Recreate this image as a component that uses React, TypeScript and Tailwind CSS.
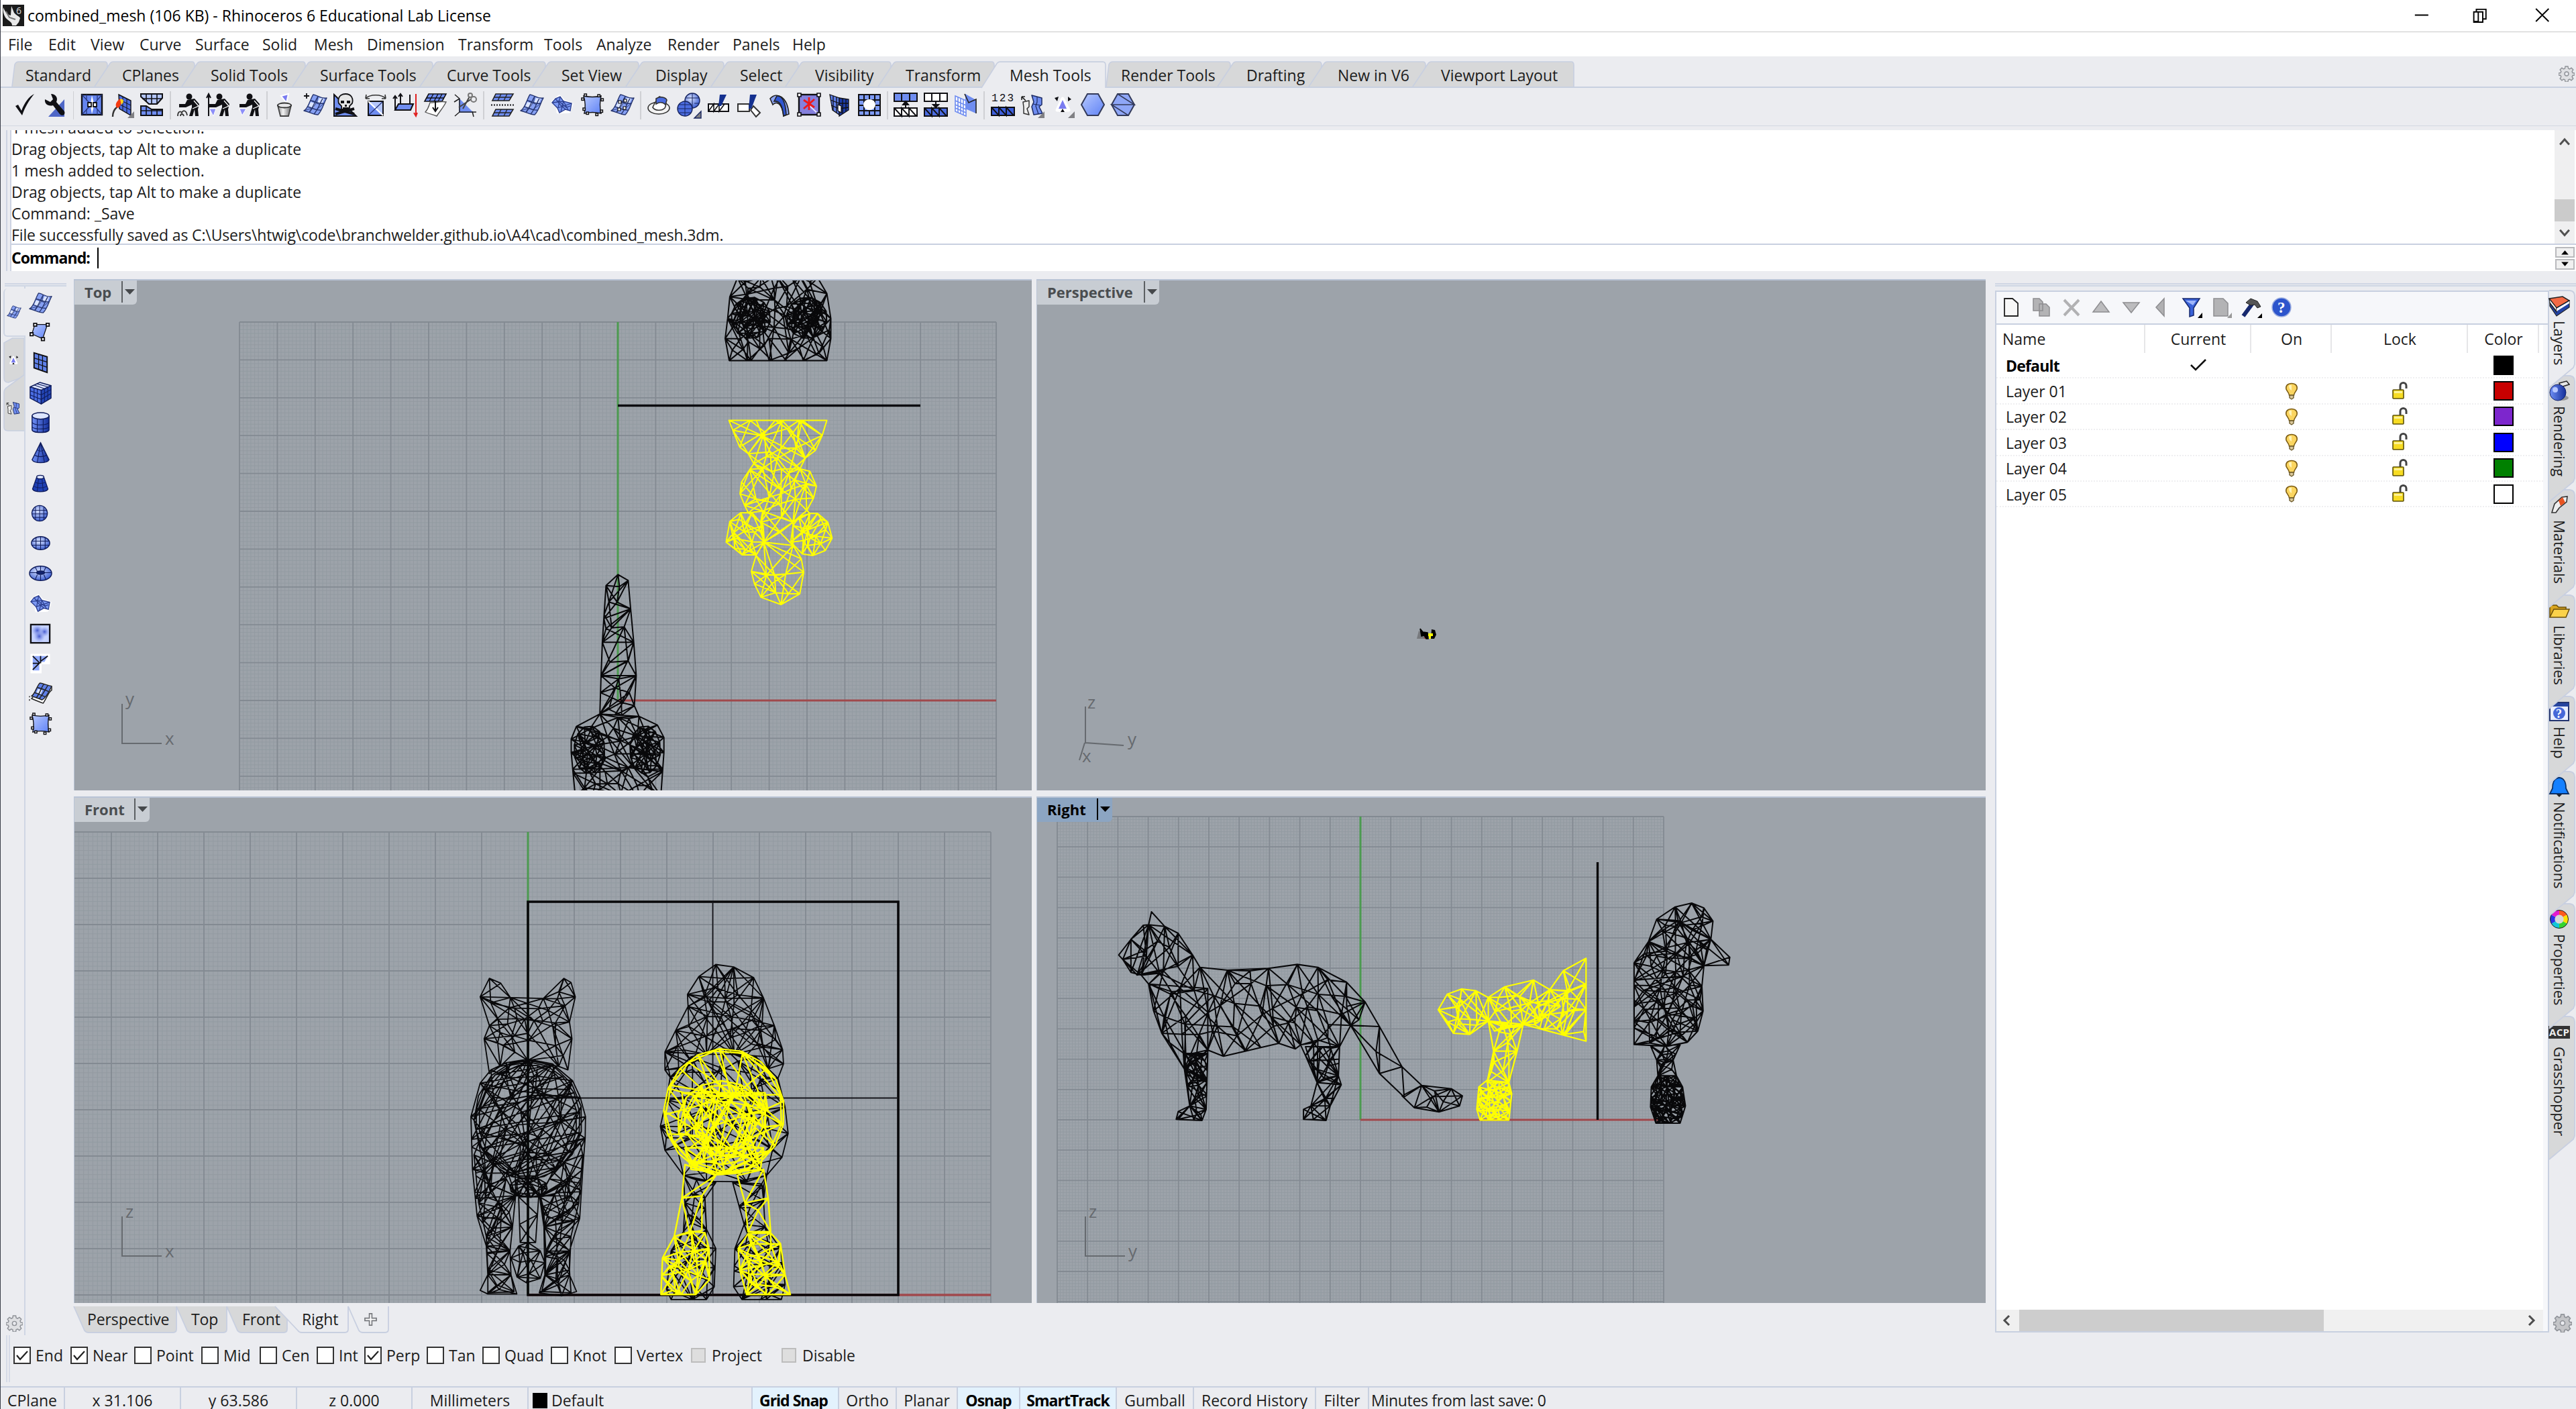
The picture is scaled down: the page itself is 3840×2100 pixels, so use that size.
import React from "react";

type Pt = [number, number];

/* ---------- wireframe generation ---------- */

function rng(seed: number) {
  let s = seed * 2654435761 + 12345;
  return () => {
    s = (s + 0x6d2b79f5) | 0;
    let t = Math.imul(s ^ (s >>> 15), 1 | s);
    t = (t + Math.imul(t ^ (t >>> 7), 61 | t)) ^ t;
    return ((t ^ (t >>> 14)) >>> 0) / 4294967296;
  };
}

function inside(p: Pt, poly: Pt[]) {
  let hit = false;
  for (let i = 0, j = poly.length - 1; i < poly.length; j = i++) {
    const [xi, yi] = poly[i];
    const [xj, yj] = poly[j];
    if (yi > p[1] !== yj > p[1] && p[0] < ((xj - xi) * (p[1] - yi)) / (yj - yi) + xi) hit = !hit;
  }
  return hit;
}

function triangulate(src: Pt[]) {
  const n = src.length;
  const p: Pt[] = [...src, [-40000, -40000], [40000, -40000], [0, 60000]];
  const make = (a: number, b: number, c: number) => {
    const [ax, ay] = p[a];
    const [bx, by] = p[b];
    const [cx, cy] = p[c];
    const d = 2 * (ax * (by - cy) + bx * (cy - ay) + cx * (ay - by)) || 1e-9;
    const a2 = ax * ax + ay * ay;
    const b2 = bx * bx + by * by;
    const c2 = cx * cx + cy * cy;
    const x = (a2 * (by - cy) + b2 * (cy - ay) + c2 * (ay - by)) / d;
    const y = (a2 * (cx - bx) + b2 * (ax - cx) + c2 * (bx - ax)) / d;
    return { v: [a, b, c], x, y, r: (ax - x) ** 2 + (ay - y) ** 2 };
  };
  let tris = [make(n, n + 1, n + 2)];
  for (let i = 0; i < n; i++) {
    const edges = new Map<string, [number, number] | null>();
    tris = tris.filter((t) => {
      if ((p[i][0] - t.x) ** 2 + (p[i][1] - t.y) ** 2 >= t.r) return true;
      for (let k = 0; k < 3; k++) {
        const a = t.v[k];
        const b = t.v[(k + 1) % 3];
        const key = a < b ? a + "_" + b : b + "_" + a;
        edges.set(key, edges.has(key) ? null : [a, b]);
      }
      return false;
    });
    edges.forEach((e) => e && tris.push(make(e[0], e[1], i)));
  }
  return tris.filter((t) => t.v.every((k) => k < n)).map((t) => t.v);
}

interface Frame {
  o: Pt;
  s: Pt;
}

function place(f: Frame, flat: number[]): Pt[] {
  const out: Pt[] = [];
  for (let i = 0; i < flat.length; i += 2) out.push([f.o[0] + flat[i] / f.s[0], f.o[1] + flat[i + 1] / f.s[1]]);
  return out;
}

function ellipse(cx: number, cy: number, rx: number, ry: number, n = 12): number[] {
  const out: number[] = [];
  for (let i = 0; i < n; i++) {
    const a = (i / n) * Math.PI * 2 + 0.2;
    out.push(cx + Math.cos(a) * rx, cy + Math.sin(a) * ry);
  }
  return out;
}

/* Each layer is triangulated in a skewed space so that its faces come out long and uneven. */
const SKEWS: [number, number, number][] = [
  [1.7, 1, 0.35],
  [1.45, 1, -0.6],
  [1, 1.35, 0.3],
];

function mesh(f: Frame, flat: number[], gap: number, layers: number, seed: number) {
  const poly = place(f, flat);
  const xs = poly.map((q) => q[0]);
  const ys = poly.map((q) => q[1]);
  const x0 = Math.min(...xs);
  const x1 = Math.max(...xs);
  const y0 = Math.min(...ys);
  const y1 = Math.max(...ys);
  let d = "M" + poly.map((q) => q[0].toFixed(1) + " " + q[1].toFixed(1)).join("L") + "Z";
  for (let l = 0; l < layers; l++) {
    const rand = rng(seed + l * 17);
    const pts: Pt[] = [];
    poly.forEach((a, i) => {
      const b = poly[(i + 1) % poly.length];
      const len = Math.hypot(b[0] - a[0], b[1] - a[1]);
      const steps = Math.max(1, Math.round(len / (gap * 1.25)));
      for (let k = 0; k < steps; k++) {
        const t = k === 0 ? 0 : (k + (rand() - 0.5) * 0.5) / steps;
        pts.push([a[0] + (b[0] - a[0]) * t + rand() * 0.02, a[1] + (b[1] - a[1]) * t + rand() * 0.02]);
      }
    });
    const tries = Math.min(3000, Math.round((((x1 - x0) * (y1 - y0)) / (gap * gap)) * 1.8));
    for (let k = 0; k < tries; k++) {
      const q: Pt = [x0 + rand() * (x1 - x0), y0 + rand() * (y1 - y0)];
      if (!inside(q, poly)) continue;
      if (pts.some((w) => Math.hypot(w[0] - q[0], w[1] - q[1]) < gap * 0.5)) continue;
      pts.push(q);
    }
    const [sx, sy, sk] = SKEWS[(l + seed) % 3];
    const seen = new Set<string>();
    triangulate(pts.map((q): Pt => [(q[0] - x0 + (q[1] - y0) * sk) * sx, (q[1] - y0) * sy])).forEach(([a, b, c]) => {
      const m: Pt = [(pts[a][0] + pts[b][0] + pts[c][0]) / 3, (pts[a][1] + pts[b][1] + pts[c][1]) / 3];
      if (!inside(m, poly)) return;
      [
        [a, b],
        [b, c],
        [c, a],
      ].forEach(([u, v]) => {
        const key = u < v ? u + "_" + v : v + "_" + u;
        if (seen.has(key)) return;
        seen.add(key);
        const q: Pt = [(pts[u][0] + pts[v][0]) / 2, (pts[u][1] + pts[v][1]) / 2];
        const near = [[1, 0], [-1, 0], [0, 1], [0, -1]].some(([dx, dy]) => inside([q[0] + dx, q[1] + dy], poly));
        if (!near) return;
        d += "M" + pts[u][0].toFixed(1) + " " + pts[u][1].toFixed(1) + "L" + pts[v][0].toFixed(1) + " " + pts[v][1].toFixed(1);
      });
    });
  }
  return d;
}

const TOP: Frame = { o: [840, 410], s: [2.178, 2.01] };
const FRONT: Frame = { o: [640, 1400], s: [2.178, 2.8] };
const RIGHT: Frame = { o: [1640, 1320], s: [1.6333, 3] };

const topBlack = [
  mesh(TOP, [565, 8, 825, 8, 855, 55, 868, 130, 868, 190, 855, 256, 538, 256, 525, 190, 533, 130, 540, 65], 25, 2, 3),
  mesh(TOP, ellipse(608, 128, 64, 62), 14, 2, 5),
  mesh(TOP, ellipse(790, 128, 66, 62), 14, 2, 8),
  mesh(TOP, ellipse(612, 122, 40, 40, 9), 14, 1, 6),
  mesh(TOP, ellipse(785, 122, 40, 40, 9), 14, 1, 9),
  mesh(TOP, [177, 897, 210, 915, 218, 1000, 228, 1100, 236, 1200, 230, 1290, 245, 1322, 118, 1315, 122, 1200, 126, 1100, 138, 930], 30, 2, 11),
  mesh(TOP, [118, 1315, 177, 1325, 245, 1322, 305, 1348, 326, 1385, 326, 1430, 316, 1560, 38, 1560, 25, 1430, 25, 1390, 42, 1352], 27, 2, 13),
  mesh(TOP, ellipse(84, 1422, 50, 72), 14, 2, 15),
  mesh(TOP, ellipse(265, 1422, 50, 72), 14, 2, 18),
];
const topYellow = [
  mesh(TOP, [537, 435, 855, 435, 840, 480, 818, 525, 785, 548, 768, 580, 800, 588, 821, 632, 812, 668, 790, 705, 800, 714, 745, 740, 745, 810, 772, 850, 780, 890, 767, 955, 706, 987, 641, 965, 620, 925, 610, 888, 625, 840, 650, 800, 640, 740, 600, 712, 588, 690, 573, 655, 578, 620, 605, 582, 618, 565, 600, 535, 572, 515, 550, 465], 30, 2, 21),
  mesh(TOP, [575, 712, 540, 738, 528, 800, 580, 838, 625, 838, 652, 800, 648, 750, 612, 712], 19, 2, 25),
  mesh(TOP, [800, 714, 825, 714, 858, 740, 872, 788, 850, 825, 810, 840, 775, 835, 738, 800, 745, 750, 765, 725], 19, 2, 29),
];
const frontCat = [
  mesh(FRONT, [195, 163, 232, 183, 263, 243, 370, 247, 437, 163, 460, 180, 474, 240, 455, 345, 463, 415, 450, 545, 420, 530, 320, 505, 230, 530, 195, 560, 178, 415, 195, 360, 165, 240], 31, 2, 31),
  mesh(FRONT, [320, 500, 400, 520, 465, 590, 490, 660, 507, 740, 506, 830, 498, 960, 488, 1165, 455, 1300, 455, 1400, 478, 1470, 430, 1488, 357, 1475, 375, 1400, 372, 1200, 358, 1075, 280, 1070, 270, 1200, 262, 1300, 265, 1400, 284, 1480, 190, 1480, 165, 1465, 190, 1400, 185, 1280, 155, 1155, 140, 960, 135, 740, 165, 600, 200, 545, 250, 515], 34, 2, 35),
  mesh(FRONT, [160, 850, 250, 1000, 280, 1070, 270, 1200, 262, 1300, 265, 1400, 275, 1470, 190, 1475, 190, 1380, 185, 1240, 160, 1100, 145, 900], 26, 2, 39),
  mesh(FRONT, [490, 850, 390, 1000, 360, 1070, 374, 1200, 378, 1300, 377, 1400, 365, 1470, 460, 1475, 455, 1380, 460, 1240, 485, 1100, 498, 900], 26, 2, 41),
  mesh(FRONT, ellipse(320, 757, 160, 235, 16), 64, 1, 43),
  mesh(FRONT, ellipse(320, 757, 170, 245, 18), 90, 1, 44),
  mesh(FRONT, ellipse(321, 752, 176, 250, 15), 110, 1, 45),
  mesh(FRONT, ellipse(322, 1035, 62, 42, 10), 14, 2, 46),
  mesh(FRONT, [320, 1265, 360, 1300, 375, 1350, 360, 1415, 315, 1433, 285, 1410, 265, 1330, 290, 1280], 22, 2, 47),
  mesh(FRONT, [290, 1075, 355, 1075, 345, 1265, 295, 1265], 32, 1, 49),
];
const frontPoodle = [
  mesh(FRONT, [930, 105, 988, 115, 1053, 160, 1085, 245, 1120, 360, 1147, 460, 1150, 520, 1132, 580, 1100, 540, 990, 480, 900, 480, 782, 575, 765, 545, 765, 470, 800, 380, 840, 280, 838, 230, 875, 155], 33, 3, 51),
  mesh(FRONT, [782, 575, 850, 490, 960, 455, 1060, 490, 1132, 580, 1155, 700, 1165, 810, 1145, 910, 1095, 985, 1030, 1012, 900, 1010, 825, 985, 765, 880, 750, 780, 770, 670], 34, 2, 55),
  mesh(FRONT, [825, 985, 930, 1015, 895, 1080, 900, 1210, 930, 1290, 925, 1450, 900, 1503, 785, 1503, 770, 1460, 785, 1300, 825, 1220, 830, 1100], 28, 2, 57),
  mesh(FRONT, [985, 1015, 1095, 985, 1085, 1090, 1090, 1200, 1140, 1290, 1155, 1440, 1143, 1503, 1015, 1503, 988, 1450, 992, 1290, 1022, 1190], 28, 2, 59),
];
const frontYellow = [
  mesh(FRONT, ellipse(957, 720, 196, 264, 17), 46, 1, 61),
  mesh(FRONT, ellipse(957, 720, 190, 258, 13), 110, 1, 62),
  mesh(FRONT, ellipse(950, 765, 145, 175, 14), 42, 1, 63),
  mesh(FRONT, ellipse(955, 755, 130, 150, 12), 60, 1, 64),
  mesh(FRONT, ellipse(960, 770, 100, 120, 12), 70, 1, 66),
  mesh(FRONT, [830, 870, 1085, 870, 1075, 960, 960, 975, 850, 960], 19, 1, 68),
  mesh(FRONT, [820, 640, 1090, 640, 1100, 720, 1040, 650, 870, 655, 830, 740], 24, 1, 69),
  mesh(FRONT, [830, 940, 930, 985, 885, 1070, 885, 1215, 845, 1225, 795, 1240, 820, 1080], 44, 1, 71),
  mesh(FRONT, [795, 1240, 850, 1218, 895, 1225, 908, 1290, 910, 1420, 865, 1482, 752, 1482, 757, 1330], 26, 2, 72),
  mesh(FRONT, [1000, 985, 1085, 960, 1100, 1080, 1108, 1220, 1035, 1220, 1025, 1100], 44, 1, 74),
  mesh(FRONT, [1108, 1225, 1140, 1270, 1155, 1400, 1172, 1482, 1030, 1482, 1008, 1380, 1003, 1290, 1035, 1228], 26, 2, 76),
];
const rightBlack = [
  mesh(RIGHT, [125, 117, 157, 182, 190, 213, 225, 310, 243, 365, 310, 378, 410, 370, 480, 352, 530, 365, 600, 432, 645, 520, 630, 600, 610, 625, 583, 720, 580, 850, 587, 890, 560, 985, 550, 1050, 495, 1045, 495, 1000, 513, 985, 528, 880, 500, 760, 488, 712, 475, 730, 435, 705, 300, 763, 262, 735, 260, 880, 258, 1000, 248, 1050, 185, 1045, 190, 1010, 218, 985, 205, 820, 150, 660, 130, 560, 118, 440, 100, 400, 75, 388, 55, 330, 45, 310, 75, 240, 105, 177, 118, 175], 36, 2, 81),
  mesh(RIGHT, [600, 432, 645, 520, 680, 630, 735, 810, 783, 893, 740, 945, 680, 840, 610, 625, 600, 540], 60, 2, 83),
  mesh(RIGHT, [783, 893, 855, 908, 882, 940, 875, 985, 825, 1012, 765, 993, 735, 940], 28, 2, 85),
  mesh(RIGHT, [120, 440, 262, 460, 262, 735, 260, 880, 258, 1000, 248, 1050, 185, 1045, 190, 1010, 218, 985, 205, 820, 150, 660], 52, 1, 87),
  mesh(RIGHT, [205, 750, 262, 750, 258, 1000, 248, 1050, 190, 1045, 218, 985], 19, 2, 88),
  mesh(RIGHT, [500, 720, 583, 720, 580, 850, 587, 890, 560, 985, 550, 1050, 495, 1045, 513, 985, 528, 880], 22, 2, 89),
  mesh(RIGHT, [125, 117, 157, 182, 190, 213, 225, 310, 190, 360, 90, 400, 55, 330, 45, 310, 75, 240, 118, 175], 34, 1, 90),
  mesh(RIGHT, [1440, 78, 1470, 100, 1492, 158, 1487, 240, 1470, 358, 1465, 450, 1468, 560, 1455, 650, 1430, 700, 1380, 718, 1300, 710, 1300, 345, 1335, 250, 1355, 150, 1400, 95], 27, 3, 91),
  mesh(RIGHT, [1487, 240, 1533, 320, 1530, 355, 1470, 358, 1460, 250], 60, 2, 93),
  mesh(RIGHT, [1340, 716, 1412, 712, 1395, 780, 1403, 850, 1358, 850, 1355, 780], 17, 2, 95),
  mesh(RIGHT, [1358, 850, 1403, 850, 1418, 900, 1425, 985, 1412, 1062, 1353, 1062, 1340, 990, 1342, 900], 12, 3, 97),
];
const rightYellow = [
  mesh(RIGHT, [1183, 325, 1183, 695, 1030, 620, 1095, 465, 1128, 380], 29, 2, 101),
  mesh(RIGHT, [1095, 465, 1120, 540, 1070, 600, 1030, 620, 960, 650, 945, 605, 945, 500, 985, 452, 1055, 422], 29, 2, 103),
  mesh(RIGHT, [945, 500, 945, 605, 900, 665, 860, 660, 823, 555, 845, 485, 880, 462, 915, 470], 24, 2, 105),
  mesh(RIGHT, [945, 605, 1030, 620, 1015, 740, 995, 880, 942, 880, 958, 740], 26, 2, 107),
  mesh(RIGHT, [942, 870, 995, 880, 1002, 930, 995, 1048, 925, 1048, 917, 1000, 922, 900], 12, 2, 109),
];

function Wire({ paths, color, width = 2 }: { paths: string[]; color: string; width?: number }) {
  return <path d={paths.join("")} fill="none" stroke={color} strokeWidth={width} strokeLinejoin="round" />;
}

function Grid({ ox, oy, pitch, y1 }: { ox: number; oy: number; pitch: number; y1: number }) {
  let minor = "";
  let major = "";
  const x0 = ox - pitch * 10;
  const x1 = ox + pitch * 10;
  const y0 = oy - pitch * 10;
  const bottom = Math.min(y1, oy + pitch * 10);
  for (let i = 0; i <= 200; i++) {
    const x = x0 + (i * pitch) / 10;
    const y = y0 + (i * pitch) / 10;
    const line = `M${x.toFixed(1)} ${y0}V${bottom}` + (y <= bottom ? `M${x0} ${y.toFixed(1)}H${x1}` : "");
    if (i % 10 === 0) major += line;
    else minor += line;
  }
  return (
    <g fill="none">
      <path d={minor} stroke="#939ba2" strokeWidth={1} />
      <path d={major} stroke="#838a92" strokeWidth={1.8} />
    </g>
  );
}

function Axes({ x, y, up, across }: { x: number; y: number; up: string; across: string }) {
  return (
    <g>
      <path d={`M${x} ${y - 59}V${y}H${x + 59}`} fill="none" stroke="#666a6f" strokeWidth={2} />
      <g fill="#666a6f" fontFamily="Open Sans, sans-serif" fontSize={26}>
        <text x={x + 5} y={y - 57}>{up}</text>
        <text x={x + 64} y={y + 2}>{across}</text>
      </g>
    </g>
  );
}

function Viewport({ name, labelW, active, box, children }: { name: string; labelW: string; active?: boolean; box: string; children: React.ReactNode }) {
  return (
    <div className="relative overflow-hidden bg-[#9da3aa] border-t-2 border-l border-[#b9c4d6]">
      <svg viewBox={box} preserveAspectRatio="none" className="absolute inset-0 h-full w-full">
        {children}
      </svg>
      <div className={`absolute left-0 top-0 flex h-[36px] items-center rounded-br-md pb-[2px] pl-[15px] text-[22px] font-bold ${labelW} ${active ? "bg-[#8ca5c2] text-black" : "bg-[#c8cdd3] text-[#4a4d50]"}`}>
        <span className="flex-1">{name}</span>
        <span className={`h-[32px] w-[2px] ${active ? "bg-black" : "bg-[#5c6063]"}`} />
        <svg viewBox="0 0 21 12" className="h-[12px] w-[21px]">
          <path d="M3 2H18L10.5 10Z" fill={active ? "#000" : "#45484b"} />
        </svg>
      </div>
    </div>
  );
}

/* ---------- icons ---------- */

const B = "#6f8df0";
const D = "#2846bd";
const L = "#b4c6fb";
const K = "#101014";

const sheet = (
  <g stroke="#26356f" strokeWidth={1.4} strokeLinejoin="round">
    <path d="M1 27C8 24 11 8 15 3C22 4 27 10 35 8C31 14 29 26 22 33C15 33 10 29 1 27Z" fill="#86a0f3" />
    <path d="M11 14L18 16L15 24L8 21ZM24 8L31 9L28 17L21 15Z" fill="#dbe5ff" stroke="none" />
    <path d="M6 21C13 22 18 27 26 26M11 12C18 12 22 18 31 16M9 29C15 22 18 12 22 6M16 32C23 24 25 15 29 9" fill="none" />
    <path d="M1 27L14 23M10 29L19 16M11 12L25 18M22 6L20 16M31 16L19 26" fill="none" strokeWidth={0.9} />
  </g>
);
const patch = (
  <g>
    <path d="M4 14L14 6L20 13L32 17L28 28L12 29L12 22Z" fill="#fff" stroke="#fff" strokeWidth={5} strokeLinejoin="round" />
    <path d="M3 15L8 9L15 6L20 13L32 16L30 27L23 25L14 30L11 23Z" fill="#7b98f2" stroke="#2c3f8f" strokeWidth={1.4} />
    <path d="M8 9L15 18L23 25M15 6L12 23M3 15L20 13L16 29M20 13L27 26M11 23L32 16M12 12L24 22L30 20" stroke="#2c3f8f" strokeWidth={1.3} fill="none" />
  </g>
);
const cage = (
  <g>
    <path d="M5 5Q18 8 31 5Q28 18 31 31Q18 28 6 31Q9 18 5 5Z" fill="url(#sky)" stroke={K} strokeWidth={1.4} />
    <g fill="#fff" stroke={K} strokeWidth={1.5}>
      {[[6, 2], [26, 3], [2, 8], [31, 9], [4, 23], [30, 26], [9, 29], [23, 31]].map(([x, y]) => (
        <rect key={x + "-" + y} x={x} y={y} width={3.4} height={3.4} />
      ))}
    </g>
  </g>
);
const reduceTri = (
  <g>
    <path d="M18 9L27 26H10Z" fill="#fff" stroke="#fff" strokeWidth={5} strokeLinejoin="round" />
    <path d="M18 11L24 24H12Z" fill="#7a7cf0" />
    <path d="M6 8L12 6L10 13ZM26 6L31 10L26 13ZM15 29L18 24L21 29Z" fill={K} />
  </g>
);
const splitMesh = (
  <g strokeLinejoin="round">
    <path d="M17 4L32 8V18L28 21L33 31L20 33L17 21L20 14Z" fill={B} stroke="#1d2b63" strokeWidth={1.5} />
    <path d="M25 6V14L23 20L27 32M19 17L30 19" stroke="#1d2b63" strokeWidth={1.2} fill="none" />
    <path d="M4 14L13 12V21L10 24L13 33L5 31V22Z" fill="#eee" stroke="#333" strokeWidth={1.5} />
    <path d="M2 6L8 12M2 6H7M2 6V11" stroke="#222" strokeWidth={1.6} fill="none" />
  </g>
);
const person = (
  <g fill={K}>
    <circle cx="19" cy="6" r="4.5" />
    <path d="M16 11L27 9L34 17L32 25L33 35H28L27 25L24 35H19L23 22V18L14 22H4V17H13Z" />
    <path d="M26 12L33 20L24 24" fill="none" stroke="#fff" strokeWidth={1.3} />
  </g>
);
const strip = (y: number, fill: string, diag: boolean) => (
  <g>
    <rect x={1} y={y} width={34} height={12} fill={fill} stroke={K} strokeWidth={2} />
    <path d={diag ? `M1 ${y}L12 ${y + 12}V${y}L23 ${y + 12}V${y}L34 ${y + 12}` : `M12 ${y}V${y + 12}M24 ${y}V${y + 12}`} stroke={K} strokeWidth={2} fill="none" />
  </g>
);
const fly = <path d="M36 28V38H26Z" fill="#808084" />;

const ICONS: Record<string, React.ReactNode> = {
  check: <path d="M4 20L8 18L13 27C18 14 24 6 32 2C24 12 18 22 14 34Z" fill={K} />,
  wrench: (
    <g>
      <path d="M32 10V36H8Z" fill={D} opacity={0.8} />
      <path d="M12 2C19 2 23 8 20 14L32 28C34 33 29 36 25 32L15 19C8 21 2 17 3 10L11 14L15 10Z" fill={K} />
    </g>
  ),
  unify: (
    <g>
      <rect x={3} y={3} width={30} height={30} fill="#6585ee" stroke={K} strokeWidth={2.4} />
      <path d="M18 4L16 16V20L18 32L21 20V16Z" fill="#fff" />
      <path d="M3 3L15 16M33 3L22 16M3 33L15 20M33 33L22 20M10 3V12M26 3V12M10 33V24M26 33V24" stroke="#26357a" strokeWidth={1.2} />
      <path d="M12 15h5v6h-5zM20 15h5v6h-5z" fill="#fff" stroke={K} strokeWidth={1.8} />
    </g>
  ),
  weld: (
    <g>
      <path d="M13 3L31 12V34L14 24Z" fill="#4b6ce0" stroke={K} strokeWidth={1.4} />
      <path d="M19 6V27M25 9V31M13 10L31 19M13 17L31 26" stroke={K} strokeWidth={1} />
      <path d="M15 9C19 15 15 23 10 23C7 18 9 14 15 9Z" fill="#f33a10" />
      <path d="M15 10C20 8 22 14 17 18Z" fill="#ffd21d" />
      <path d="M10 22C5 26 4 30 4 36" stroke="#333" strokeWidth={2.4} fill="none" />
      {fly}
    </g>
  ),
  match: (
    <g stroke={K} strokeWidth={2}>
      <path d="M2 2H34V8L26 17H14L2 6Z" fill={L} />
      <path d="M2 34H34V25H18L10 20H2Z" fill={B} />
      <path d="M10 2V14M18 2V17M26 2V17M4 9H33M2 27H34M10 20V34M18 25V34M26 25V34" strokeWidth={1.6} fill="none" />
    </g>
  ),
  shrub: (
    <g>
      {person}
      <path d="M2 35C2 28 6 27 8 30C10 25 15 27 16 34M6 35C6 31 10 31 11 35" stroke="#333" strokeWidth={1.8} fill="none" />
    </g>
  ),
  raise: (
    <g>
      {person}
      <path d="M3 35V4M0 8L3 2L6 8" stroke={K} strokeWidth={2} fill="none" />
      <path d="M4 24H14L10 35Z" fill="#8d8ff8" stroke="#fff" />
    </g>
  ),
  lower: (
    <g>
      {person}
      <path d="M4 24H14L8 34Z" fill="#8d8ff8" stroke="#fff" />
    </g>
  ),
  bin: (
    <g>
      <path d="M12 5L23 2L20 15Z" fill="#7a7cf0" stroke="#fff" strokeWidth={2} />
      <path d="M7 19L11 35H23L27 19Z" fill="url(#metal)" stroke="#444" strokeWidth={1.8} />
      <ellipse cx="17" cy="19" rx="10" ry="3.5" fill="#e8e8ea" stroke="#333" strokeWidth={1.8} />
    </g>
  ),
  addSheet: (
    <g>
      {sheet}
      <path d="M1 5H9M5 1V9" stroke={K} strokeWidth={1.8} />
    </g>
  ),
  skull: (
    <g>
      <path d="M1 3L34 35H1Z" fill={B} stroke={K} strokeWidth={2} />
      <path d="M3 24L31 32M31 24L3 32" stroke={K} strokeWidth={4} />
      <path d="M18 2C27 2 30 9 28 16L24 20V25H12V20L8 16C6 9 9 2 18 2Z" fill="#e6e6e6" stroke={K} strokeWidth={1.8} />
      <path d="M11 12h5v4h-5zM20 12h5v4h-5zM17 18h3v3h-3zM14 22h9v3h-9z" fill={K} />
    </g>
  ),
  flip: (
    <g>
      <path d="M3 9C9 2 27 2 33 9M3 9L4 3M3 9L9 9M33 9L32 3M33 9H27" fill="none" stroke="#333" strokeWidth={1.6} />
      <rect x={7} y={13} width={22} height={21} fill={B} stroke={K} strokeWidth={2} />
      <path d="M9 14H28V32Z" fill={L} />
      <path d="M7 13L29 34" stroke="#fff" strokeWidth={2.4} />
      <path d="M28 14L8 33" stroke="#26357a" strokeWidth={1.3} />
    </g>
  ),
  arrows: (
    <g strokeWidth={2} fill="none">
      <path d="M8 17H30L26 26H3Z" fill={B} stroke={K} />
      <path d="M3 26V6M11 17V3M25 17V3M0 9L3 5L6 9M8 6L11 2L14 6" stroke={K} />
      <path d="M34 2V35M31 30L34 35L36 30" stroke="#e02020" />
    </g>
  ),
  project: (
    <g>
      <path d="M8 2H34L28 13H2Z" fill={B} stroke={K} strokeWidth={1.6} />
      <path d="M5 8H31M15 2L9 13M22 2L16 13M28 2L22 13" stroke={K} strokeWidth={1.4} />
      <path d="M10 15C18 16 24 12 34 14C30 22 26 26 20 35C14 32 8 32 3 29C8 24 8 20 10 15Z" fill="#fff" stroke="#555" strokeWidth={1.4} />
      <path d="M18 12V27M14 22L18 28L22 22" stroke={K} strokeWidth={2} fill="none" />
    </g>
  ),
  scissors: (
    <g>
      <path d="M8 8V30H30Z" fill={B} />
      <path d="M2 3L9 9V29L2 35M9 29H34M9 9L1 14M28 28L30 36" stroke="#222" strokeWidth={1.5} fill="none" />
      <path d="M8 22L26 10M14 24L24 6" stroke="#444" strokeWidth={2} />
      <circle cx="30" cy="10" r="4" fill="none" stroke="#777" strokeWidth={2} />
      <circle cx="25" cy="4" r="3" fill="none" stroke="#777" strokeWidth={2} />
    </g>
  ),
  offset: (
    <g>
      <path d="M8 2H34L28 12H3ZM8 25H34L28 35H3Z" fill={B} stroke="#222" strokeWidth={1.6} />
      <path d="M5 7H31M16 2L11 12M25 2L20 12M5 30H31M16 25L11 35M25 25L20 35" stroke="#222" strokeWidth={1.3} />
      <path d="M1 18.500H35" stroke={K} strokeWidth={2} strokeDasharray="2 2" />
    </g>
  ),
  sheet,
  patch,
  cage,
  nurbs: (
    <g>
      {sheet}
      <path d="M12 12h4v4h-4zM20 10h4v4h-4zM11 23h4v4h-4zM19 21h4v4h-4z" fill="#fff" stroke={K} strokeWidth={1.2} />
    </g>
  ),
  hat: (
    <g stroke="#333" strokeWidth={1.6}>
      <ellipse cx="18" cy="23" rx="16" ry="9" fill="#f2f2f2" />
      <path d="M9 22C12 14 16 10 19 6L28 9C28 14 30 18 27 23C22 28 12 27 9 22Z" fill="#fff" />
      <path d="M14 9C20 5 28 7 30 11L28 18C24 14 19 14 14 17Z" fill="#4b6ce0" />
    </g>
  ),
  booleans: (
    <g stroke="#17245e" strokeWidth={1.4}>
      <circle cx="23" cy="12" r="11" fill="url(#ball)" />
      <circle cx="12" cy="24" r="11" fill="#4b6ce0" />
      <path d="M12 13V35M1 24H23M4 18H21M4 30H21M23 1V22M14 8H33M26 16H33" strokeWidth={1} />
      {fly}
    </g>
  ),
  trim: (
    <g>
      <rect x={2} y={17} width={30} height={11} fill="#fff" stroke={K} strokeWidth={2} />
      <path d="M2 28L10 17V28L18 17V28L26 17" stroke={K} strokeWidth={1.6} fill="none" />
      <path d="M19 3H29L21 20H17Z" fill="#14308f" />
    </g>
  ),
  split: (
    <g>
      <path d="M1 17H18V28H1ZM24 20L34 30L28 36L20 26Z" fill="#fff" stroke="#333" strokeWidth={2} />
      <path d="M19 3H29L21 24H17Z" fill="#14308f" />
    </g>
  ),
  pipe: (
    <g stroke="#222" strokeWidth={1.6}>
      <path d="M4 9C14 -2 30 6 32 32L24 35C22 16 14 12 8 18Z" fill="#8da4f2" />
      <path d="M14 5C22 4 27 14 28 33L24 35C22 18 18 12 10 13Z" fill="#2f55d0" />
    </g>
  ),
  star: (
    <g>
      <rect x={3} y={3} width={30} height={30} fill="#8580dd" stroke={K} strokeWidth={2.4} />
      <path d="M18 19L33 33" stroke="#e6e2ff" strokeWidth={1.8} />
      <path d="M18 7V26M10 11L26 22M26 10L10 24" stroke="#f01818" strokeWidth={2.8} />
      <path d="M1 1h5v5h-5zM30 1h5v5h-5zM1 30h5v5h-5zM30 30h5v5h-5z" fill="#fff" stroke={K} strokeWidth={1.6} />
    </g>
  ),
  folded: (
    <g stroke={K} strokeWidth={1.3}>
      <path d="M4 3L18 8V33L8 26Z" fill="#5e7ee8" />
      <path d="M18 8L32 10V26L18 35Z" fill="#1c3ba6" />
      <path d="M9 5V27M14 7V30M5 11L18 16L32 16M6 19L18 24L32 22M23 9V31M28 9V28" fill="none" />
      <path d="M16 18L21 20V30L16 27Z" fill="#fff" />
    </g>
  ),
  hole: (
    <g>
      <rect x={2} y={3} width={32} height={31} fill="#7d9af5" stroke={K} strokeWidth={2} />
      <path d="M10 3V34M18 3V34M26 3V34M2 11H34M2 19H34M2 27H34" stroke={K} strokeWidth={2} />
      <ellipse cx="18" cy="18" rx="9" ry="8" fill="#fff" />
    </g>
  ),
  up: (
    <g>
      {strip(1, B, false)}
      {strip(23, "#fff", true)}
      <path d="M18 23V14M14 18L18 13L22 18Z" stroke={K} strokeWidth={2} fill={K} />
    </g>
  ),
  down: (
    <g>
      {strip(1, "#fff", false)}
      {strip(23, "#4b6ce0", true)}
      <path d="M18 13V21M14 18L18 22L22 18Z" stroke={K} strokeWidth={2} fill={K} />
    </g>
  ),
  mirror: (
    <g>
      <path d="M2 5L18 12V35L2 28Z" fill="#fff" stroke={B} strokeWidth={1.6} />
      <path d="M6 7V30M10 9V32M14 10V34M2 12L18 19M2 18L18 25M2 23L18 30" stroke={B} strokeWidth={1.6} />
      <path d="M17 2L33 11V31L17 24Z" fill={B} />
      <path d="M16 2L22 15L33 10V31" fill="none" stroke="#222" strokeWidth={1.6} />
    </g>
  ),
  count: (
    <g>
      <text x="1" y="13" fontSize="16" fontFamily="Liberation Mono, monospace" textLength="33" fill={K}>123</text>
      {strip(22, "#3d5fdc", true)}
    </g>
  ),
  splitMesh: (
    <g>
      {splitMesh}
      {fly}
    </g>
  ),
  reduce: (
    <g>
      {reduceTri}
      {fly}
    </g>
  ),
  reduceTri,
  splitPlain: splitMesh,
  hex: <path d="M10 2H26L35 18L26 34H10L1 18Z" fill="url(#sky)" stroke="#333a5a" strokeWidth={2} />,
  hexTri: (
    <g stroke="#333a5a" strokeWidth={2}>
      <path d="M10 2H26L35 18L26 34H10L1 18Z" fill="#8ea6f7" />
      <path d="M10 2L35 18H1L26 34" fill="none" strokeWidth={1.5} />
    </g>
  ),
  quad: (
    <g>
      <path d="M9 4L30 4L22 28L4 20Z" fill="url(#sky)" stroke={K} strokeWidth={1.4} />
      <path d="M7 2h5v5h-5zM28 2h5v5h-5zM1 18h5v5h-5zM20 26h5v5h-5z" fill="#fff" stroke={K} strokeWidth={2} />
    </g>
  ),
  plane: (
    <g stroke={K} strokeWidth={1.3}>
      <path d="M8 3L28 9V33L8 26Z" fill="#5f80e8" strokeWidth={2} />
      <path d="M15 5V28M21 7V31M8 11L28 17M8 18L28 25" />
    </g>
  ),
  box: (
    <g stroke="#0f1c5c" strokeWidth={1.5} strokeLinejoin="round">
      <path d="M2 9L17 2L34 7L19 14Z" fill="#dce5ff" />
      <path d="M2 9L19 14V35L2 26Z" fill="#4a6de2" />
      <path d="M19 14L34 7V26L19 35Z" fill="#2345b5" />
      <path d="M8 11V29M13 12V32M24 12V32M29 10V29M2 15L19 21L34 13M2 21L19 28L34 19M8 6L25 12M12 4L30 9" fill="none" strokeWidth={1.1} />
    </g>
  ),
  cylinder: (
    <g stroke="#0f1c5c" strokeWidth={1.5}>
      <path d="M5 7V28C5 34 31 34 31 28V7Z" fill="url(#deep)" />
      <ellipse cx="18" cy="7" rx="13" ry="5" fill="#dce5ff" />
      <path d="M13 12V32M22 12V32M5 17C8 22 28 22 31 17M5 24C8 28 28 28 31 24" fill="none" strokeWidth={1.1} />
    </g>
  ),
  cone: (
    <g stroke="#0f1c5c" strokeWidth={1.5}>
      <path d="M18 2L31 28C28 34 8 34 5 28Z" fill="url(#deep)" />
      <path d="M18 2L13 32M18 2L24 32M13 13C16 15 20 15 23 13M9 21C14 24 22 24 27 21" fill="none" strokeWidth={1.1} />
    </g>
  ),
  tcone: (
    <g stroke="#0f1c5c" strokeWidth={1.5}>
      <path d="M12 8L5 28C8 34 28 34 31 28L24 8Z" fill="#1f40b4" />
      <ellipse cx="18" cy="8" rx="6" ry="3" fill="#dce5ff" />
      <path d="M15 11L13 32M21 11L23 32M10 17C14 19 22 19 26 17M7 23C13 27 23 27 29 23" fill="none" strokeWidth={1.1} />
    </g>
  ),
  sphere: (
    <g stroke="#0f1c5c" strokeWidth={1.5}>
      <circle cx="17" cy="18" r="13" fill="url(#ball)" />
      <path d="M17 5V31M10 7V29M24 7V29M5 13H29M4 19H30M6 25H28" strokeWidth={1.1} />
    </g>
  ),
  ellipsoid: (
    <g stroke="#0f1c5c" strokeWidth={1.5}>
      <ellipse cx="18" cy="18" rx="14" ry="10" fill="url(#ball)" />
      <path d="M18 8V28M11 9V27M25 9V27M5 15H31M5 21H31" strokeWidth={1.1} />
    </g>
  ),
  torus: (
    <g stroke="#0f1c5c" strokeWidth={1.5}>
      <ellipse cx="18" cy="18" rx="17" ry="11" fill="url(#ball)" />
      <ellipse cx="18" cy="17" rx="6" ry="2.500" fill="#12236e" />
      <path d="M18 7V14M10 9L13 15M26 9L23 15M18 20V29M10 27L13 20M26 27L23 20M1 17H12M24 17H35" strokeWidth={1.1} />
    </g>
  ),
  height: (
    <g>
      <rect x={3} y={4} width={29} height={28} fill="#c5d2ff" stroke={K} strokeWidth={2.4} />
      <g fill="url(#spot)">
        <circle cx="13" cy="13" r="9" />
        <circle cx="24" cy="15" r="8" />
        <circle cx="16" cy="22" r="9" />
      </g>
    </g>
  ),
  corner: (
    <g>
      <path d="M5 6H30V17H17V31H5Z" fill="#fff" stroke="#fff" strokeWidth={5} />
      <path d="M6 7H29L24 16H16V29H6Z" fill="#8fa9ff" />
      <path d="M6 7L17 18M18 7V18M29 7L18 15M6 18H16L6 28" stroke={K} strokeWidth={1.8} fill="none" />
    </g>
  ),
  thick: (
    <g stroke="#222" strokeWidth={1.5} strokeLinejoin="round">
      <path d="M4 26C9 28 16 31 22 33C28 24 30 16 35 13V8L20 9Z" fill="#fff" />
      <path d="M4 22C10 19 12 6 17 2C23 3 29 6 35 7C31 14 28 24 20 28C14 25 9 24 4 22Z" fill="#5f80e8" />
      <path d="M14 11L21 13L18 20L11 18Z" fill="#dbe5ff" stroke="none" />
      <path d="M9 17C15 18 20 22 25 23M13 9C19 10 25 13 30 15M11 25C17 19 18 10 23 4M16 26C22 19 25 12 29 6" fill="none" />
      <path d="M1 22V24M1 27V29" />
    </g>
  ),
};

function Icon({ name, className }: { name: string; className: string }) {
  return (
    <svg viewBox="0 0 36 36" className={`shrink-0 overflow-visible ${className}`}>
      {ICONS[name]}
    </svg>
  );
}

function Gear({ className, fill }: { className: string; fill: string }) {
  return (
    <svg viewBox="0 0 24 24" className={className}>
      <path d="M10 1h4l.5 3 2 .9 2.600-1.700 2.700 2.700-1.700 2.600.9 2 3 .5v3l-3 .5-.9 2 1.700 2.600-2.700 2.700-2.600-1.700-2 .9-.5 3h-4l-.5-3-2-.9-2.600 1.700-2.700-2.700 1.700-2.600-.9-2-3-.5v-3l3-.5.9-2-1.700-2.600 2.700-2.700 2.600 1.700 2-.9z" fill={fill} stroke="#8f9298" strokeWidth={1.4} />
      <circle cx="12" cy="12" r="3" fill="#eaebef" stroke="#8f9298" strokeWidth={1.4} />
    </svg>
  );
}

/* ---------- window chrome ---------- */

const MENUS = [
  ["File", "w-[60px]"], ["Edit", "w-[63px]"], ["View", "w-[73px]"], ["Curve", "w-[83px]"], ["Surface", "w-[100px]"],
  ["Solid", "w-[77px]"], ["Mesh", "w-[79px]"], ["Dimension", "w-[136px]"], ["Transform", "w-[128px]"], ["Tools", "w-[78px]"],
  ["Analyze", "w-[106px]"], ["Render", "w-[97px]"], ["Panels", "w-[89px]"], ["Help", "w-[80px]"],
];

const TABS: [string, number, string][] = [
  ["Standard", 143, "pl-[20px]"], ["CPlanes", 130, "pl-[21px]"], ["Solid Tools", 165, "pl-[23px]"], ["Surface Tools", 190, "pl-[21px]"],
  ["Curve Tools", 168, "pl-[20px]"], ["Set View", 139, "pl-[23px]"], ["Display", 127, "pl-[24px]"], ["Select", 111, "pl-[23px]"],
  ["Visibility", 138, "pl-[24px]"], ["Transform", 154, "pl-[21px]"], ["Mesh Tools", 166, "pl-[22px]"], ["Render Tools", 186, "pl-[22px]"],
  ["Drafting", 136, "pl-[23px]"], ["New in V6", 155, "pl-[23px]"], ["Viewport Layout", 221, "pl-[22px]"],
];

const TOOLS = [
  ["check", "wrench"],
  ["unify", "weld", "match"],
  ["shrub", "raise", "lower"],
  ["bin", "addSheet", "skull", "flip", "arrows", "project", "scissors"],
  ["offset", "sheet", "patch", "cage", "nurbs"],
  ["hat", "booleans", "trim", "split", "pipe", "star", "folded", "hole"],
  ["up", "down", "mirror"],
  ["count", "splitMesh", "reduce", "hex", "hexTri"],
];

function TitleBar() {
  return (
    <div className="flex h-[48px] items-center border-b border-[#c9c9c9] bg-white pl-[3px]">
      <svg viewBox="0 0 32 32" className="mt-[-2px] h-[32px] w-[32px]">
        <rect width="32" height="32" fill="#1b1b1b" />
        <path d="M1 4C4 12 7 15 12 16L13 2L17 12C20 16 25 17 26 20L24 26L20 31H14C14 25 8 24 4 19C1 14 0 9 1 4Z" fill="#e9e9e9" />
        <path d="M5 10L10 19L19 22" stroke="#777" fill="none" strokeWidth={2} />
        <text x="20" y="14" fontSize="14" fill="#ddd" fontFamily="Open Sans, sans-serif">6</text>
      </svg>
      <span className="ml-[5px] flex-1 text-black">combined_mesh (106 KB) - Rhinoceros 6 Educational Lab License</span>
      <svg viewBox="0 0 220 26" className="mr-[34px] mt-[-3px] h-[25px] w-[210px]" fill="none" stroke="#000" strokeWidth={2}>
        <path d="M4 13H25M103 8V23H96M96 8H110V24H96ZM100 8V4H115V19H110M193 3L213 23M213 3L193 23" />
      </svg>
    </div>
  );
}

function MenuBar() {
  return (
    <div className="flex h-[36px] items-center bg-white pl-[11px]">
      {MENUS.map(([m, w]) => (
        <span key={m} className={`whitespace-nowrap ${w}`}>{m}</span>
      ))}
    </div>
  );
}

function TabBar() {
  return (
    <div className="flex h-[47px] items-end border-b-2 border-[#c8d0e0] pl-[17px]">
      {TABS.map(([t, w, pad], i) => {
        const on = t === "Mesh Tools";
        const l = t === "Render Tools" || i === 0 ? 20 : 0;
        return (
          <div key={t} className={`relative flex items-center ${pad} ${on ? "-mb-[2px] h-[40px] pt-[2px]" : "h-[38px] pt-[4px]"}`} style={{ width: w }}>
            <svg className="absolute -left-[20px] top-0 h-full overflow-visible" width={w + 20} viewBox={`0 0 ${w + 20} 38`} preserveAspectRatio="none">
              <path d={`M${l} 38L${l ? l + 4 : 22} 5Q${l ? l + 6 : 24} 1 ${l ? l + 10 : 28} 1H${w + 15}Q${w + 19} 1 ${w + 19} 6V38`} fill={on ? "#ebecf0" : "#d7d8d9"} stroke="#c8cfe0" strokeWidth={1.6} />
            </svg>
            <span className="relative whitespace-nowrap">{t}</span>
          </div>
        );
      })}
      <div className="flex h-full flex-1 items-center justify-end pr-[2px] pt-[6px]">
        <Gear className="h-[24px] w-[24px]" fill="#dfe0e3" />
      </div>
    </div>
  );
}

function Toolbar() {
  return (
    <div className="flex h-[57px] items-start border-b border-[#d3d8e2] pl-[8px] pt-[3px]">
      <div className="w-[6px]" />
      {TOOLS.map((group, g) => (
        <React.Fragment key={g}>
          {g > 0 && <div className="mx-[4px] mt-[2px] h-[42px] w-[1.800px] bg-[#cfd0d4]" />}
          {group.map((n) => (
            <div key={n} className="flex h-[44px] w-[44.800px] items-center justify-center">
              <Icon name={n} className="h-[36px] w-[36px]" />
            </div>
          ))}
        </React.Fragment>
      ))}
    </div>
  );
}

function CommandArea() {
  const lines = ["Drag objects, tap Alt to make a duplicate", "1 mesh added to selection.", "Drag objects, tap Alt to make a duplicate", "Command: _Save"];
  return (
    <div className="mt-[6px] flex h-[210px] pl-[8px]">
      <div className="w-[8px] border-x-2 border-[#cdd3e2]" />
      <div className="flex flex-1 flex-col bg-white">
        <div className="flex h-[171px] border-b-2 border-[#c8d0e0]">
          <div className="h-[169px] flex-1 whitespace-nowrap leading-[32px]">
            <div className="flex h-[12px] items-end overflow-hidden">1 mesh added to selection.</div>
            {lines.map((l, i) => (
              <div key={i}>{l}</div>
            ))}
            <div className="tracking-[-0.15px]">File successfully saved as C:\Users\htwig\code\branchwelder.github.io\A4\cad\combined_mesh.3dm.</div>
          </div>
          <div className="mr-[2px] flex w-[30px] flex-col items-center bg-[#efeff0]">
            <svg viewBox="0 0 30 34" className="h-[34px] w-[30px]" fill="none" stroke="#505050" strokeWidth={3}>
              <path d="M8 22L15 14L22 22" />
            </svg>
            <div className="mt-[70px] h-[33px] w-full bg-[#cbcbcb]" />
            <svg viewBox="0 0 30 34" className="h-[34px] w-[30px]" fill="none" stroke="#505050" strokeWidth={3}>
              <path d="M8 13L15 21L22 13" />
            </svg>
          </div>
        </div>
        <div className="flex flex-1 items-center">
          <span className="w-[128px] font-bold tracking-[-0.9px] text-black">Command:</span>
          <span className="h-[31px] w-[2px] bg-black" />
          <div className="mr-[2px] ml-auto flex flex-col gap-[2px]">
            {["M8 11L14 4L20 11Z", "M8 3H20L14 10Z"].map((d) => (
              <div key={d} className="flex h-[16px] w-[29px] items-center justify-center border-2 border-[#b9babd] bg-[#f0f0f0]">
                <svg viewBox="0 0 28 14" className="h-[14px] w-[28px]">
                  <path d={d} fill="#000" />
                </svg>
              </div>
            ))}
          </div>
        </div>
      </div>
    </div>
  );
}

/* ---------- left tool strip ---------- */

const SIDE_TOOLS = ["sheet", "quad", "plane", "box", "cylinder", "cone", "tcone", "sphere", "ellipsoid", "torus", "patch", "height", "corner", "thick", "cage"];

function LeftBar() {
  return (
    <div className="flex w-[110px] flex-col pt-[18px]">
      <div className="ml-[6px] h-[5px] w-[92px] border-y-2 border-[#cfd6e4]" />
      <div className="flex flex-1">
        <div className="flex w-[37px] flex-col border-r-2 border-[#cfd6e4] pl-[4px]">
          <div className="-mr-[2px] mt-[3px] flex h-[72px] items-center justify-center rounded-l-md border-b-2 border-l-2 border-[#cfd6e4] bg-[#ebecf0] pr-[4px]">
            <Icon name="sheet" className="h-[22px] w-[22px]" />
          </div>
          <div className="relative flex h-[70px] items-center justify-center pr-[2px]">
            <svg viewBox="0 0 32 70" className="absolute inset-0 h-full w-full">
              <path d="M32 1H14L1 8V62Q1 69 8 69L32 60Z" fill="#d7d8d9" stroke="#c8cfe0" strokeWidth={1.6} />
            </svg>
            <Icon name="reduceTri" className="relative h-[20px] w-[20px]" />
          </div>
          <div className="relative flex h-[72px] items-center justify-center pr-[2px]">
            <svg viewBox="0 0 32 72" className="absolute inset-0 h-full w-full overflow-visible">
              <path d="M32 -15L6 4Q1 7 1 12V66Q1 71 7 71H32" fill="#d7d8d9" stroke="#c8cfe0" strokeWidth={1.6} />
            </svg>
            <Icon name="splitPlain" className="relative h-[22px] w-[22px]" />
          </div>
          <Gear className="ml-[4px] mt-auto mb-[5px] h-[25px] w-[25px]" fill="#dfe0e3" />
        </div>
        <div className="flex flex-col pt-[2px]">
          {SIDE_TOOLS.map((n) => (
            <div key={n} className="flex h-[44.800px] w-[44px] items-center justify-center">
              <Icon name={n} className={n === "quad" || n === "tcone" || n === "sphere" ? "h-[32px] w-[32px]" : "h-[35px] w-[35px]"} />
            </div>
          ))}
        </div>
      </div>
    </div>
  );
}

/* ---------- viewports ---------- */

const VIEW_TABS: [string, number, string][] = [
  ["Perspective", 153, "pl-[20px]"],
  ["Top", 75, "pl-[22px]"],
  ["Front", 90, "pl-[23px]"],
  ["Right", 91, "pl-[22px]"],
  ["", 60, ""],
];

function Viewports() {
  return (
    <div className="flex w-[2850px] flex-col pt-[12px]">
      <div className="grid grid-cols-[1428px_1415px] grid-rows-[762px_755px] gap-x-[7px] gap-y-[9px]">
        <Viewport name="Top" labelW="w-[93px]" box="111 418 1427 760">
          <Grid ox={921} oy={1044} pitch={56.4} y1={1180} />
          <path d="M921 480V1044" stroke="#4c9a50" strokeWidth={3} />
          <path d="M921 1044H1485" stroke="#a0494c" strokeWidth={3} />
          <Wire paths={topBlack} color="#08080a" />
          <path d="M921 604.500H1372" stroke="#0c0c10" strokeWidth={3.600} />
          <Wire paths={topYellow} color="#ffff00" />
          <Axes x={182} y={1108} up="y" across="x" />
        </Viewport>
        <Viewport name="Perspective" labelW="w-[182px]" box="1546 418 1414 760">
          <path d="M1618 1053V1107L1675 1111M1617 1107L1609 1133" fill="none" stroke="#666a6f" strokeWidth={2} />
          <g fill="#666a6f" fontFamily="Open Sans, sans-serif" fontSize={26}>
            <text x={1621} y={1056}>z</text>
            <text x={1681} y={1111}>y</text>
            <text x={1613} y={1136}>x</text>
          </g>
          <path d="M2115 940L2112 952H2130Z" fill="#77797d" />
          <path d="M2126 944L2124 952" stroke="#a0494c" strokeWidth={3} />
          <path d="M2117 937L2121 942L2128 943L2129 952H2126L2123 947L2119 948Z" fill="#000" stroke="#000" strokeWidth={1.5} />
          <path d="M2134 938L2139 939L2141 946L2138 952H2133Z" fill="#000" />
          <path d="M2129 944H2136V948H2133V952H2130V948H2129Z" fill="#ff0" />
        </Viewport>
        <Viewport name="Front" labelW="w-[112px]" box="111 1189 1427 753">
          <Grid ox={787} oy={1930} pitch={69} y1={1942} />
          <path d="M787 1240V1930" stroke="#4c9a50" strokeWidth={3} />
          <path d="M787 1930H1477" stroke="#a0494c" strokeWidth={3.500} />
          <path d="M787 1344H1339V1930H787Z" fill="none" stroke="#08080a" strokeWidth={3.600} />
          <path d="M1062.500 1344V1930M787 1636.500H1339" stroke="#15151a" strokeWidth={1.800} />
          <Wire paths={frontCat} color="#08080a" width={1.800} />
          <Wire paths={frontPoodle} color="#08080a" width={1.800} />
          <Wire paths={frontYellow} color="#ffff00" width={2.400} />
          <Axes x={182} y={1872} up="z" across="x" />
        </Viewport>
        <Viewport name="Right" labelW="w-[112px]" active box="1546 1189 1414 753">
          <Grid ox={2028} oy={1669} pitch={45.2} y1={1942} />
          <path d="M2028 1217V1669" stroke="#4c9a50" strokeWidth={3} />
          <path d="M2028 1669H2480" stroke="#a0494c" strokeWidth={3} />
          <path d="M2381.500 1285V1669" stroke="#08080a" strokeWidth={3.400} />
          <Wire paths={rightBlack} color="#08080a" />
          <Wire paths={rightYellow} color="#ffff00" width={2.200} />
          <Axes x={1618} y={1872} up="z" across="y" />
        </Viewport>
      </div>
      <div className="mt-[5px] flex h-[40px]">
        {VIEW_TABS.map(([t, w, pad]) => {
          const on = t === "Right" || t === "";
          const lead = t === "Right" ? -18 : 0;
          return (
            <div key={t || "add"} className={`relative flex items-center pb-[2px] ${pad}`} style={{ width: w }}>
              <svg className="absolute inset-0 h-full w-full overflow-visible" viewBox={`0 0 ${w} 40`}>
                <path d={`M${lead} 0L16 36Q18 39 22 39H${w - 5}Q${w} 39 ${w} 34V0Z`} fill={on ? "#ebecf0" : "#d7d8d9"} />
                <path d={`M${lead} 0L16 36Q18 39 22 39H${w - 5}Q${w} 39 ${w} 34V0`} fill="none" stroke="#c8cfe0" strokeWidth={1.8} />
              </svg>
              {t ? (
                <span className="relative tracking-[-0.1px]">{t}</span>
              ) : (
                <svg viewBox="0 0 20 20" className="relative ml-[24px] h-[19px] w-[19px]" fill="#fff" stroke="#77797e" strokeWidth={1.8}>
                  <path d="M8 1H12V8H19V12H12V19H8V12H1V8H8Z" />
                </svg>
              )}
            </div>
          );
        })}
      </div>
    </div>
  );
}

/* ---------- layers panel ---------- */

const LAYERS = [
  ["Default", "bg-black"],
  ["Layer 01", "bg-[#c80000]"],
  ["Layer 02", "bg-[#7d26cd]"],
  ["Layer 03", "bg-[#0000ff]"],
  ["Layer 04", "bg-[#008000]"],
  ["Layer 05", "bg-white"],
];

const COLS = "grid grid-cols-[222px_158px_120px_203px_106px]";

const PANEL_ICONS: React.ReactNode[] = [
  <path d="M5 3H17L25 10V29H5Z" fill="#f7f7f7" stroke="#222" strokeWidth={1.800} />,
  <path d="M3 3H12L17 8V21H3ZM12 11H22L27 16V29H12Z" fill="#b3b3b5" stroke="#8d8d90" strokeWidth={1.500} />,
  <path d="M4 5L26 28M26 5L4 28" stroke="#b1b1b3" strokeWidth={4} />,
  <path d="M15 7L27 23H3Z" fill="#bcbcbe" stroke="#8d8d90" strokeWidth={1.500} />,
  <path d="M15 24L27 9H3Z" fill="#bcbcbe" stroke="#8d8d90" strokeWidth={1.500} />,
  <path d="M7 16L19 3V29Z" fill="#b0b0b2" stroke="#8d8d90" strokeWidth={1.500} />,
  <g>
    <path d="M2 3H27L18 17V28L12 30V17Z" fill="#3a62d8" stroke="#16286e" strokeWidth={1.500} />
    <path d="M6 6H22L17 13Z" fill="#9fb6fa" />
    <path d="M31 24V32H24Z" fill="#000" />
  </g>,
  <g>
    <path d="M3 3H17L24 10V29H3Z" fill="#b3b3b5" stroke="#8d8d90" strokeWidth={1.500} />
    <path d="M30 24V32H23Z" fill="#999" />
  </g>,
  <g>
    <path d="M17 10L3 29" stroke="#16286e" strokeWidth={6} />
    <path d="M7 9L14 3L24 7L29 15L24 17L20 12L14 13Z" fill="#555" stroke="#222" />
    <path d="M31 25V32H24Z" fill="#000" />
  </g>,
  <g>
    <circle cx="15" cy="16" r="14" fill="#2d55cc" stroke="#9fb0e0" strokeWidth={1.500} />
    <text x="9" y="24" fontSize="23" fontWeight="bold" fill="#fff" fontFamily="Liberation Serif, serif">?</text>
  </g>,
];

function Bulb() {
  return (
    <svg viewBox="0 0 20 26" className="h-[26px] w-[20px]">
      <path d="M10 1.500C16 1.500 19 5 18 10C17 13 14 15 13.500 19H6.500C6 15 3 13 2 10C1 5 4 1.500 10 1.500Z" fill="#fbd560" stroke="#7a5a12" strokeWidth={1.600} />
      <path d="M7 19H13V23L10 25L7 23Z" fill="#d9c79a" stroke="#6b5a2a" strokeWidth={1.400} />
      <path d="M6 5Q8 3 10 4V12Q6 10 6 5Z" fill="#fff3b8" />
    </svg>
  );
}

function Unlock() {
  return (
    <svg viewBox="0 0 26 28" className="h-[28px] w-[26px]">
      <path d="M13 13V6C13 0 22 0 22 6V10" fill="none" stroke="#444" strokeWidth={3} />
      <rect x="2" y="12" width="16" height="13" rx="1" fill="#f7dc22" stroke="#5d5208" strokeWidth={1.600} />
      <path d="M4 14H16V17H4Z" fill="#fdf196" />
    </svg>
  );
}

const SIDE_TABS: [string, number, string, React.ReactNode][] = [
  ["Layers", 127, "z-[8]", <g><path d="M1 5L21 2L31 8L12 19Z" fill="#f36a45" stroke="#222" strokeWidth={1.5} /><path d="M1 5L12 19V24L2 11Z" fill="#fff" stroke="#222" strokeWidth={1.2} /><path d="M12 19L31 8V18L12 31L2 16V12L12 25Z" fill="#2343a5" stroke="#222" strokeWidth={1.2} /><path d="M12 20L31 9V12L12 24Z" fill="#fff" /></g>],
  ["Rendering", 170, "z-[7]", <g><path d="M16 4L27 1L31 6L18 10Z" fill="#e8e8e8" stroke="#222" strokeWidth={1.5} /><ellipse cx="19" cy="26" rx="11" ry="4" fill="#555" opacity={0.5} /><circle cx="14" cy="18" r="12" fill="url(#deep)" stroke="#14246b" /><circle cx="10" cy="14" r="4" fill="#b8c8ff" /></g>],
  ["Materials", 157, "z-[6]", <g><path d="M5 27L9 14L20 4L28 3L27 11L16 20L11 27Z" fill="#eee" stroke="#333" strokeWidth={1.6} /><path d="M15 9L21 4L25 12L18 17Z" fill="#e85320" /></g>],
  ["Libraries", 151, "z-[5]", <g><path d="M2 8H12L15 11H26V25H2Z" fill="#d9a520" stroke="#6b4f0a" strokeWidth={1.5} /><path d="M8 14H31L26 26H2Z" fill="#fbd24a" stroke="#6b4f0a" strokeWidth={1.5} /></g>],
  ["Help", 112, "z-[4]", <g><rect x="2" y="2" width="28" height="27" fill="#e9eeff" stroke="#23346f" strokeWidth={2} /><path d="M2 3H30V8H2Z" fill="#27459f" /><circle cx="16" cy="18" r="9" fill="#4668d8" /><text x="11" y="25" fontSize="18" fontWeight="bold" fill="#fff" fontFamily="Liberation Serif, serif">?</text></g>],
  ["Notifications", 197, "z-[3]", <g><path d="M16 2C24 3 26 9 26 18L30 26H2L6 18C6 9 8 3 16 2Z" fill="#1480ff" stroke="#0a2f66" strokeWidth={1.8} /><path d="M12 27H20L16 31Z" fill="#222" /></g>],
  ["Properties", 168, "z-[2]", <g fill="none" strokeWidth={7}><path d="M16 6A10 10 0 0 1 24.700 11" stroke="#ff5a1e" /><path d="M24.700 11A10 10 0 0 1 24.700 21" stroke="#ffe000" /><path d="M24.700 21A10 10 0 0 1 16 26" stroke="#35d430" /><path d="M16 26A10 10 0 0 1 7.300 21" stroke="#12c7d8" /><path d="M7.300 21A10 10 0 0 1 7.300 11" stroke="#2a32e8" /><path d="M7.300 11A10 10 0 0 1 16 6" stroke="#e51ad0" /><circle cx="16" cy="16" r="13.500" stroke="#222" strokeWidth={1} /></g>],
  ["Grasshopper", 195, "z-[1]", <g><rect x="0" y="7" width="32" height="19" fill="#333" /><text x="1" y="22" fontSize="15" fontWeight="bold" fill="#eee" textLength="30" fontFamily="Open Sans, sans-serif">ACP</text></g>],
];

function RightPanel() {
  return (
    <div className="flex flex-1 flex-col pl-[14px] pt-[18px]">
      <div className="h-[5px] border-y-2 border-[#cfd6e4]" />
      <div className="mt-[6px] flex">
        <div className="flex h-[1553px] w-[826px] flex-col border-2 border-[#c8d0e0] bg-[#f6f7fa]">
          <div className="flex h-[49px] items-center border-b-2 border-[#c8d0e0] pb-[2px] pl-[7px]">
            {PANEL_ICONS.map((ic, i) => (
              <svg key={i} viewBox="0 0 32 32" className="mr-[12.800px] h-[32px] w-[32px]">
                {ic}
              </svg>
            ))}
          </div>
          <div className="mr-[7px] flex flex-1 flex-col bg-white">
            <div className={`h-[42px] ${COLS}`}>
              {["Name", "Current", "On", "Lock", "Color"].map((h, i) => (
                <div key={h} className={`flex items-center border-r-2 border-[#e6e6e8] ${i === 0 ? "pl-[9px]" : "justify-center pl-[2px]"}`}>{h}</div>
              ))}
            </div>
            {LAYERS.map(([name, sw], i) => (
              <div key={name} className={`h-[38.400px] border-b-2 border-dotted border-[#efeff1] ${COLS}`}>
                <div className={`flex items-center pl-[14px] pt-[2px] ${i === 0 ? "font-bold tracking-[-0.8px] text-black" : ""}`}>{name}</div>
                <div className="flex items-center justify-center">
                  {i === 0 && (
                    <svg viewBox="0 0 26 20" className="h-[20px] w-[26px]">
                      <path d="M2 10L9 17L24 2" fill="none" stroke="#111" strokeWidth={2.600} />
                    </svg>
                  )}
                </div>
                <div className="flex items-center justify-center">{i > 0 && <Bulb />}</div>
                <div className="flex items-center justify-center">{i > 0 && <Unlock />}</div>
                <div className="flex items-center justify-center">
                  <div className={`h-[29px] w-[30px] border-2 border-black ${sw}`} />
                </div>
              </div>
            ))}
            <div className="mt-auto flex h-[32px] items-center bg-[#f0f0f0]">
              <svg viewBox="0 0 34 32" className="h-[32px] w-[34px]" fill="none" stroke="#4d4d4d" strokeWidth={3}>
                <path d="M19 9L12 16L19 23" />
              </svg>
              <div className="h-full w-[454px] bg-[#cdcdcd]" />
              <svg viewBox="0 0 34 32" className="ml-auto h-[32px] w-[34px]" fill="none" stroke="#4d4d4d" strokeWidth={3}>
                <path d="M13 9L20 16L13 23" />
              </svg>
            </div>
          </div>
        </div>
        <div className="flex w-[40px] flex-col">
          {SIDE_TABS.map(([t, h, z, icon], i) => (
            <div key={t} className={`relative flex flex-col items-center pt-[7px] ${z}`} style={{ height: h }}>
              <svg className="absolute inset-0 h-full w-full overflow-visible" viewBox={`0 0 40 ${h}`}>
                <path d={`M0 0H31Q38 1 38 8V${h - 17}L36 ${h - 12}L0 ${h + 18}`} fill={i === 0 ? "#ebecf0" : "#d7d8d9"} stroke="#c8cfe0" strokeWidth={1.8} />
              </svg>
              <svg viewBox="0 0 32 32" className="relative -ml-[10px] h-[32px] w-[32px] shrink-0">
                {icon}
              </svg>
              <span className="relative mt-[6px] -ml-[8px] text-[22px] leading-[26px] [writing-mode:vertical-rl]">{t}</span>
            </div>
          ))}
          <Gear className="mt-auto h-[28px] w-[28px] self-center" fill="#c4c5c8" />
        </div>
      </div>
    </div>
  );
}

/* ---------- snaps and status ---------- */

const SNAPS: [string, string, string][] = [
  ["End", "w-[85px]", "on"], ["Near", "w-[95px]", "on"], ["Point", "w-[100px]", ""], ["Mid", "w-[87px]", ""], ["Cen", "w-[85px]", ""],
  ["Int", "w-[71px]", ""], ["Perp", "w-[93px]", "on"], ["Tan", "w-[83px]", ""], ["Quad", "w-[102px]", ""], ["Knot", "w-[95px]", ""],
  ["Vertex", "w-[114px]", ""], ["Project", "w-[135px]", "off"], ["Disable", "w-[120px]", "off"],
];

function SnapBar() {
  return (
    <div className="flex h-[76px] pl-[8px]">
      <div className="h-[70px] w-[6px] border-x-2 border-[#d6dbe7]" />
      <div className="flex h-[60px] items-center pl-[5px]">
        {SNAPS.map(([t, w, s]) => (
          <div key={t} className={`flex items-center whitespace-nowrap ${w}`}>
            {s === "off" ? (
              <span className="mr-[9px] h-[22px] w-[22px] border-2 border-[#bdbdbd] bg-[#dedede]" />
            ) : (
              <svg viewBox="0 0 26 26" className="mr-[7px] h-[26px] w-[26px]">
                <rect x="1" y="1" width="24" height="24" fill="#fff" stroke="#333" strokeWidth={2} />
                {s === "on" && <path d="M5 13L10 19L21 7" fill="none" stroke="#222" strokeWidth={2.200} />}
              </svg>
            )}
            {t}
          </div>
        ))}
      </div>
    </div>
  );
}

const STATUS: [string, string, boolean][] = [
  ["CPlane", "w-[96px]", false], ["x 31.106", "w-[173px]", false], ["y 63.586", "w-[173px]", false], ["z 0.000", "w-[172px]", false],
  ["Millimeters", "w-[173px]", false], ["Default", "w-[334px]", false], ["Grid Snap", "w-[129px]", true], ["Ortho", "w-[86px]", false],
  ["Planar", "w-[91px]", false], ["Osnap", "w-[93px]", true], ["SmartTrack", "w-[144px]", true], ["Gumball", "w-[115px]", false],
  ["Record History", "w-[182px]", false], ["Filter", "w-[79px]", false],
];

function StatusBar() {
  return (
    <div className="flex h-[34px] border-t-2 border-[#c8d0e0]">
      {STATUS.map(([t, w, on]) => (
        <div key={t} className={`flex items-center whitespace-nowrap border-r-2 border-[#c8d0e0] pt-[6px] ${w} ${t === "Default" ? "pl-[6px]" : t === "Grid Snap" ? "pl-[10px]" : "justify-center"} ${on ? "bg-[#e3f2fd] font-bold tracking-[-1px] text-black" : ""}`}>
          {t === "Default" && <span className="mr-[6px] h-[23px] w-[22px] bg-black" />}
          {t}
        </div>
      ))}
      <div className="flex items-center whitespace-nowrap pl-[3px] pt-[6px] tracking-[-0.3px]">Minutes from last save: 0</div>
    </div>
  );
}

export default function App() {
  return (
    <div className="flex h-[2100px] w-[3840px] flex-col overflow-hidden border-l border-[#3b3f4a] bg-[#ebecf0] font-['Open_Sans',sans-serif] text-[23px] leading-none text-[#1c1c1c] [font-stretch:93%]">
      <svg className="absolute h-0 w-0">
        <defs>
          <linearGradient id="sky" x1="0" y1="0" x2="1" y2="1">
            <stop offset="0" stopColor="#b7c9ff" />
            <stop offset="1" stopColor="#5f82f5" />
          </linearGradient>
          <linearGradient id="deep" x1="0" y1="0" x2="1" y2="0">
            <stop offset="0" stopColor="#6f8ff5" />
            <stop offset="1" stopColor="#142f9a" />
          </linearGradient>
          <linearGradient id="metal" x1="0" y1="0" x2="1" y2="0">
            <stop offset="0" stopColor="#8a8a8d" />
            <stop offset="0.4" stopColor="#f4f4f4" />
            <stop offset="1" stopColor="#6a6a6d" />
          </linearGradient>
          <radialGradient id="ball" cx="0.4" cy="0.35" r="0.7">
            <stop offset="0" stopColor="#dbe5ff" />
            <stop offset="1" stopColor="#3558cf" />
          </radialGradient>
          <radialGradient id="spot">
            <stop offset="0" stopColor="#4459cf" />
            <stop offset="1" stopColor="#8ea0ee" stopOpacity="0" />
          </radialGradient>
        </defs>
      </svg>
      <TitleBar />
      <MenuBar />
      <TabBar />
      <Toolbar />
      <CommandArea />
      <div className="flex h-[1586px]">
        <LeftBar />
        <Viewports />
        <RightPanel />
      </div>
      <SnapBar />
      <StatusBar />
    </div>
  );
}
